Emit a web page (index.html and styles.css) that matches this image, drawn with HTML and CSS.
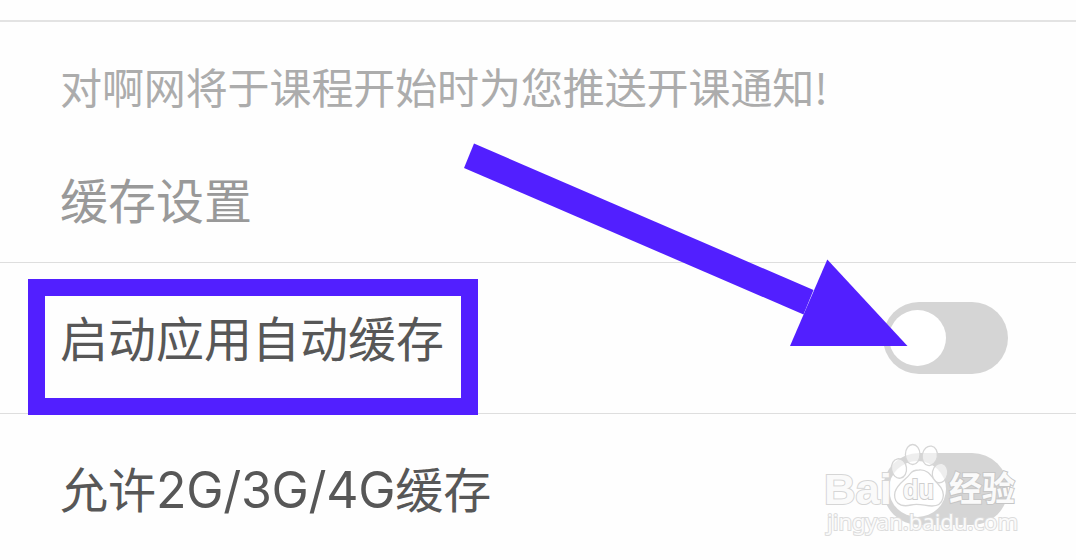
FILE: index.html
```html
<!DOCTYPE html>
<html lang="zh-CN">
<head>
<meta charset="utf-8">
<title>缓存设置</title>
<link rel="stylesheet" href="styles.css">
</head>
<body>
<main class="screen">
  <div class="top-edge"></div>
  <p class="notice">对啊网将于课程开始时为您推送开课通知!</p>
  <h1 class="section-title">缓存设置</h1>
  <div class="row">
    <span class="label">启动应用自动缓存</span>
    <span class="switch"><span class="knob"></span></span>
  </div>
  <div class="row">
    <span class="label">允许<span class="latin">2G/3G/4G</span>缓存</span>
    <span class="switch"><span class="knob"></span></span>
  </div>
  <div class="highlight"></div>
  <svg class="overlay" viewBox="0 0 1076 560">
    <g fill="#521fff">
      <path d="M474 143.5 L813.5 290 L803.5 314.5 L464 168 Z"/>
      <path d="M827.3 259.5 L907.5 346 L790 346 Z"/>
    </g>
    <g class="mark">
      <text class="brand" x="824" y="503.500" textLength="68" lengthAdjust="spacingAndGlyphs">Bai</text>
      <ellipse cx="899" cy="468.500" rx="7.500" ry="9.800" transform="rotate(-8 899 468.500)"/>
      <ellipse cx="912.700" cy="454.500" rx="7.300" ry="10"/>
      <ellipse cx="929.800" cy="455.800" rx="7.600" ry="9.800" transform="rotate(10 929.800 455.800)"/>
      <ellipse cx="940" cy="473" rx="7.600" ry="9.800" transform="rotate(12 940 473)"/>
      <path d="M919 470 C929 469 932 478 938 484 C947 493 944 506 932 506 C925 506 919 503 911 505 C899 508 893 501 895 492 C898 483 906 480 910 474 C912 471 915 470 919 470 Z"/>
      <text class="du" x="903" y="499" textLength="31" lengthAdjust="spacingAndGlyphs">du</text>
      <text class="cjk" x="949" y="501" textLength="66" lengthAdjust="spacingAndGlyphs">经验</text>
      <text class="site" x="827" y="530" textLength="191" lengthAdjust="spacingAndGlyphs">jingyan.baidu.com</text>
    </g>
  </svg>
</main>
</body>
</html>
```
FILE: styles.css
```css
* { box-sizing: border-box; }
body { margin: 0; background: #fefefe; }
.screen {
  position: relative;
  width: 1076px;
  height: 560px;
  overflow: hidden;
  font-family: "Noto Sans CJK SC", sans-serif;
}
.top-edge { height: 22px; border-bottom: 2px solid #e3e3e3; }
.notice {
  margin: 34px 0 0 60px;
  font-size: 42px;
  line-height: 60px;
  letter-spacing: -0.1px;
  color: #acacac;
  white-space: nowrap;
}
.section-title {
  margin: 47px 0 0 60px;
  font-size: 48px;
  font-weight: 400;
  line-height: 70px;
  color: #999;
}
.row {
  display: flex;
  justify-content: space-between;
  align-items: center;
  height: 151px;
  padding: 0 68px 0 60px;
  border-top: 1px solid #dedede;
}
.section-title + .row { margin-top: 29px; }
.label { padding-bottom: 4px; font-size: 48px; line-height: 70px; color: #575757; white-space: nowrap; }
.latin { font-family: Inter, sans-serif; font-size: 50px; letter-spacing: -0.3px; line-height: 1; }
.switch {
  display: flex;
  width: 125px;
  height: 72px;
  padding: 8px 6px;
  border-radius: 36px;
  background: #d5d5d5;
}
.knob { width: 57px; height: 56px; border-radius: 50%; background: #fff; }
.highlight {
  position: absolute;
  left: 28px;
  top: 279px;
  width: 450px;
  height: 136px;
  border: 17px solid #521fff;
}
.overlay { position: absolute; left: 0; top: 0; width: 1076px; height: 560px; }
.mark { fill: #fff; fill-opacity: .6; stroke: #d6d6d6; stroke-width: 1.3; }
.mark text { paint-order: stroke; stroke-width: 2; fill: #fafafa; fill-opacity: 1; }
.brand { font: 700 43px "Liberation Sans", sans-serif; }
.mark .du { font: 700 27px "Liberation Sans", sans-serif; stroke: #cfcfcf; }
.mark .cjk { font: 700 34px "Noto Sans CJK SC", sans-serif; stroke: #c6c6c6; }
.mark .site { font: 400 22px "Noto Sans", sans-serif; stroke: #dcdcdc; }
```
